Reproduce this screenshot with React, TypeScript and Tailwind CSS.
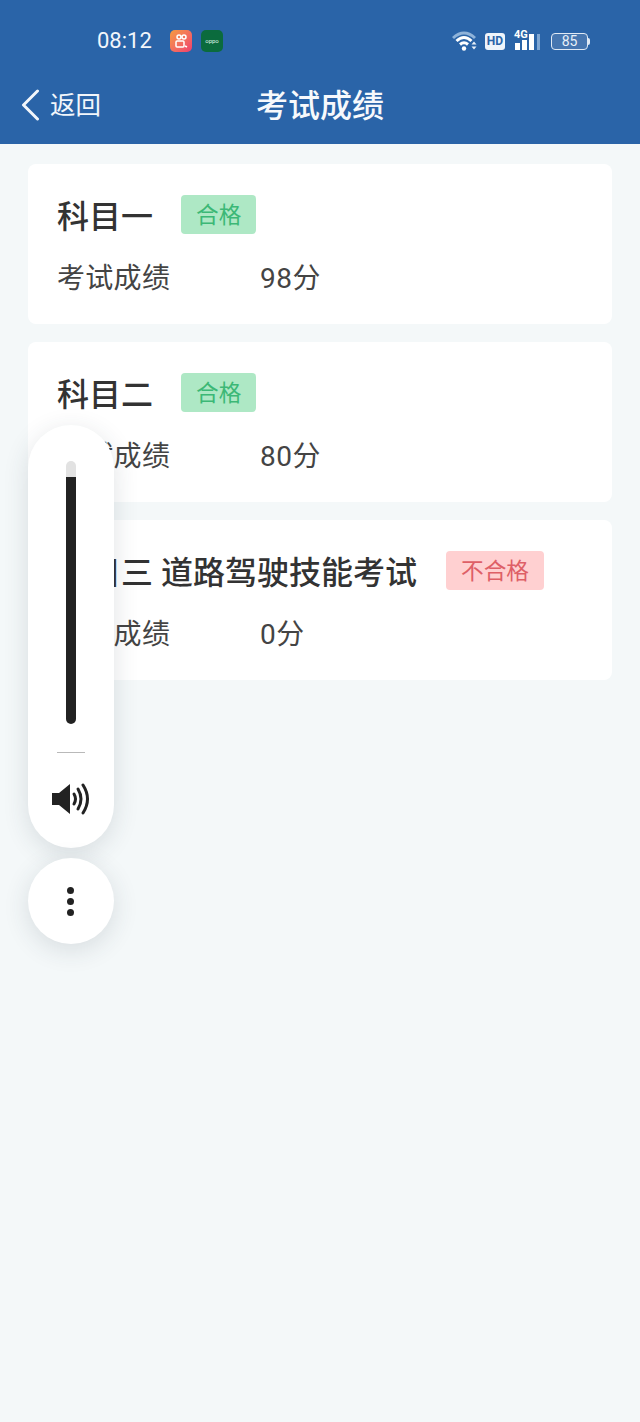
function Badge({ text, ok }: { text: string; ok: boolean }) {
  return (
    <span
      className={
        "flex h-[39px] items-center rounded-[4px] px-[15px] pt-[3px] text-[22.7px] font-normal leading-none " +
        (ok ? "bg-[#aee8c5] text-[#3cb876]" : "bg-[#ffd0d1] text-[#de5f67]")
      }
    >
      {text}
    </span>
  );
}

function Card({ title, badge, ok, score, gap }: { title: string; badge: string; ok: boolean; score: string; gap: string }) {
  return (
    <div className="h-[160px] rounded-[8px] bg-white pl-[29px] pt-[31px]">
      <div className={"flex h-[39px] items-center " + gap}>
        <span className="pt-[5px] text-[32px] font-medium leading-none text-[#333333]">{title}</span>
        <Badge text={badge} ok={ok} />
      </div>
      <div className="mt-[25px] flex h-[40px] items-center text-[28px] leading-none text-[#444444]">
        <span className="w-[203px] tracking-[0.3px]">考试成绩</span>
        <span className="tracking-[0.5px]">{score}</span>
      </div>
    </div>
  );
}

function StatusBar() {
  return (
    <div className="flex h-[72px] items-center pl-[97px] pr-[50px] pt-[10px] text-white">
      <span className="w-[73px] text-[22px] leading-none text-[#f2f6fb]">08:12</span>
      <span className="flex h-[22px] w-[22px] items-center justify-center rounded-[5px] bg-gradient-to-br from-[#f59a3c] to-[#ee3a6e]">
        <svg width="16" height="16" viewBox="0 0 16 16" fill="none" stroke="#fff" strokeWidth="1.5">
          <circle cx="6" cy="4" r="2" />
          <circle cx="11" cy="4" r="2" />
          <rect x="3" y="8" width="8" height="6" rx="1" />
          <path d="M12 13l2 1" />
        </svg>
      </span>
      <span className="ml-[9px] flex h-[22px] w-[22px] items-center justify-center rounded-[5px] bg-[#0b6b3d] text-[6px] leading-none text-[#dff3e6]">
        oppo
      </span>
      <div className="ml-auto flex items-center">
        <svg width="26" height="22" viewBox="0 0 26 22" fill="none">
          <path d="M1 8 Q12 -2 23 8" stroke="#8fb3d9" strokeWidth="3" />
          <path d="M4.5 11 Q12 4 19.5 11" stroke="#fff" strokeWidth="3" />
          <path d="M8 14.5 Q12 11 16 14.5" stroke="#fff" strokeWidth="3" />
          <circle cx="12" cy="18.5" r="2.2" fill="#fff" />
          <path d="M19.5 14.5l2.5-3 2.5 3zM19.5 16.5l2.5 3 2.5-3z" fill="#e8f0f8" />
        </svg>
        <span className="ml-[7px] flex h-[17px] w-[20px] items-center justify-center rounded-[3px] bg-[#eef4fb] text-[12px] font-bold leading-none text-[#2a64a8]">
          HD
        </span>
        <div className="relative ml-[9px] h-[22px] w-[28px]">
          <span className="absolute left-0 top-[-1px] text-[11px] font-bold leading-none text-white">4G</span>
          <svg width="28" height="22" viewBox="0 0 28 22" fill="#fff">
            <rect x="1" y="13" width="5" height="7" />
            <rect x="8" y="10" width="5" height="10" />
            <rect x="15" y="4" width="5" height="16" />
            <rect x="23" y="4" width="3" height="16" fill="#7fa6d2" />
          </svg>
        </div>
        <div className="ml-[9px] flex items-center">
          <span className="flex h-[17px] w-[37px] items-center justify-center rounded-[4px] border border-[#dfe9f4] bg-[#4676b0] text-[14px] leading-none text-[#e8f0f8]">
            85
          </span>
          <span className="h-[7px] w-[2px] rounded-r-[2px] bg-[#dfe9f4]" />
        </div>
      </div>
    </div>
  );
}

function FloatingControls() {
  return (
    <div className="absolute left-[28px] top-[425px] flex w-[86px] flex-col gap-[10px]">
      <div className="flex h-[423px] flex-col items-center rounded-full bg-white pt-[36px] shadow-[0_6px_26px_rgba(40,60,70,0.14)]">
        <div className="flex h-[263px] w-[10px] flex-col">
          <div className="h-[16px] rounded-t-[5px] bg-[#e2e2e2]" />
          <div className="flex-1 rounded-b-[5px] bg-[#222222]" />
        </div>
        <div className="mt-[28px] h-px w-[28px] bg-[#b9b9b9]" />
        <svg className="mt-[30px]" width="40" height="32" viewBox="0 0 40 32" fill="none">
          <path d="M1 10h7l11-9v30l-11-9h-7z" fill="#222" />
          <path d="M23 11q3 5 0 10" stroke="#222" strokeWidth="3" strokeLinecap="round" />
          <path d="M27 6q6 10 0 20" stroke="#222" strokeWidth="3" strokeLinecap="round" />
          <path d="M32 2q9 14 0 28" stroke="#222" strokeWidth="3" strokeLinecap="round" />
        </svg>
      </div>
      <div className="flex h-[86px] flex-col items-center justify-center gap-[4px] rounded-full bg-white pr-[1px] shadow-[0_6px_26px_rgba(40,60,70,0.14)]">
        <span className="h-[7px] w-[7px] rounded-full bg-[#222222]" />
        <span className="h-[7px] w-[7px] rounded-full bg-[#222222]" />
        <span className="h-[7px] w-[7px] rounded-full bg-[#222222]" />
      </div>
    </div>
  );
}

export default function App() {
  return (
    <div className="relative h-[1422px] w-[640px] overflow-hidden bg-[#f4f8f9] font-['Roboto','Noto_Sans_CJK_SC',sans-serif]">
      <header className="h-[144px] bg-[#2a64a8]">
        <StatusBar />
        <div className="relative flex h-[72px] items-center justify-center">
          <div className="absolute left-[21px] top-[17px] flex items-center text-white">
            <svg width="19" height="32" viewBox="0 0 19 32" fill="none" stroke="#f2f6fb" strokeWidth="3" strokeLinecap="round" strokeLinejoin="round">
              <path d="M16.5 2 L2.5 16 L16.5 30" />
            </svg>
            <span className="ml-[10px] pt-[2px] text-[25.5px] leading-none text-[#f2f6fb]">返回</span>
          </div>
          <h1 className="pb-[4px] text-[32px] font-medium leading-none text-[#f7f9fc]">考试成绩</h1>
        </div>
      </header>
      <main className="flex flex-col gap-[18px] px-[28px] pt-[20px]">
        <Card title="科目一" badge="合格" ok score="98分" gap="gap-[28px]" />
        <Card title="科目二" badge="合格" ok score="80分" gap="gap-[28px]" />
        <Card title="科目三 道路驾驶技能考试" badge="不合格" ok={false} score="0分" gap="gap-[29px]" />
      </main>
      <FloatingControls />
    </div>
  );
}
